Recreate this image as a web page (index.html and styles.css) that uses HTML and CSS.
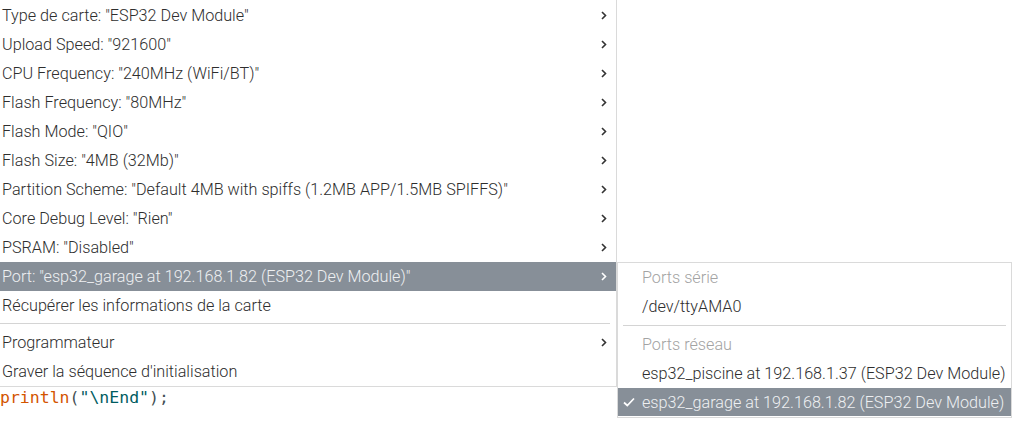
FILE: index.html
```html
<!DOCTYPE html>
<html lang="fr">
<head>
<meta charset="utf-8">
<link rel="stylesheet" href="styles.css">
</head>
<body>
<div class="screen">
  <div class="menu">
    <div class="item"><span>Type de carte: "ESP32 Dev Module"</span><svg class="chev" viewBox="0 0 6 9"><path d="M1 1 L4.5 4.5 L1 8"/></svg></div>
    <div class="item"><span>Upload Speed: "921600"</span><svg class="chev" viewBox="0 0 6 9"><path d="M1 1 L4.5 4.5 L1 8"/></svg></div>
    <div class="item"><span>CPU Frequency: "240MHz (WiFi/BT)"</span><svg class="chev" viewBox="0 0 6 9"><path d="M1 1 L4.5 4.5 L1 8"/></svg></div>
    <div class="item"><span>Flash Frequency: "80MHz"</span><svg class="chev" viewBox="0 0 6 9"><path d="M1 1 L4.5 4.5 L1 8"/></svg></div>
    <div class="item"><span>Flash Mode: "QIO"</span><svg class="chev" viewBox="0 0 6 9"><path d="M1 1 L4.5 4.5 L1 8"/></svg></div>
    <div class="item"><span>Flash Size: "4MB (32Mb)"</span><svg class="chev" viewBox="0 0 6 9"><path d="M1 1 L4.5 4.5 L1 8"/></svg></div>
    <div class="item"><span>Partition Scheme: "Default 4MB with spiffs (1.2MB APP/1.5MB SPIFFS)"</span><svg class="chev" viewBox="0 0 6 9"><path d="M1 1 L4.5 4.5 L1 8"/></svg></div>
    <div class="item"><span>Core Debug Level: "Rien"</span><svg class="chev" viewBox="0 0 6 9"><path d="M1 1 L4.5 4.5 L1 8"/></svg></div>
    <div class="item"><span>PSRAM: "Disabled"</span><svg class="chev" viewBox="0 0 6 9"><path d="M1 1 L4.5 4.5 L1 8"/></svg></div>
    <div class="item active"><span>Port: "esp32_garage at 192.168.1.82 (ESP32 Dev Module)"</span><svg class="chev" viewBox="0 0 6 9"><path d="M1 1 L4.5 4.5 L1 8"/></svg></div>
    <div class="item"><span>Récupérer les informations de la carte</span></div>
    <div class="sep"></div>
    <div class="item"><span>Programmateur</span><svg class="chev" viewBox="0 0 6 9"><path d="M1 1 L4.5 4.5 L1 8"/></svg></div>
    <div class="item"><span>Graver la séquence d'initialisation</span></div>
  </div>
  <div class="code"><span class="kw">println</span>(<span class="str">"\nEnd"</span>);</div>

  <div class="submenu">
    <div class="sitem header">Ports série</div>
    <div class="sitem">/dev/ttyAMA0</div>
    <div class="ssep"></div>
    <div class="sitem header">Ports réseau</div>
    <div class="sitem">esp32_piscine at 192.168.1.37 (ESP32 Dev Module)</div>
    <div class="sitem active"><svg class="check" viewBox="0 0 12 10"><path d="M1 5.5 L4.3 8.5 L11 1.5"/></svg>esp32_garage at 192.168.1.82 (ESP32 Dev Module)</div>
  </div>
</div>
</body>
</html>
```
FILE: styles.css
```css
html, body {
  margin: 0;
  padding: 0;
  background: #ffffff;
}
.screen {
  position: relative;
  width: 1018px;
  height: 424px;
  overflow: hidden;
  font-family: Roboto, "Liberation Sans", sans-serif;
  font-size: 16.2px;
  font-weight: 300;
  color: #2e2e2e;
}
.menu {
  width: 616px;
  padding-top: 1px;
  border-right: 1px solid #dadada;
  border-bottom: 1px solid #dadada;
  background: #ffffff;
}
.item {
  height: 29px;
  display: flex;
  align-items: center;
  justify-content: space-between;
  padding-left: 2px;
  padding-right: 9px;
  white-space: nowrap;
}
.item.active {
  background: #878f98;
  color: #eef0f2;
}
.chev {
  width: 6px;
  height: 9px;
  fill: none;
  stroke: #333333;
  stroke-width: 1.6;
}
.item.active .chev {
  stroke: #ffffff;
}
.sep {
  height: 1px;
  background: #d4d4d4;
  margin: 3px 6px 4px 0;
}
.code {
  font-family: "DejaVu Sans Mono", monospace;
  font-size: 16.5px;
  font-weight: 400;
  line-height: 22px;
  color: #434f54;
}
.kw { color: #d35400; }
.str { color: #005c5f; }

.submenu {
  position: absolute;
  left: 617px;
  top: 262px;
  width: 393px;
  padding-bottom: 1px;
  background: #ffffff;
  border: 1px solid #dadada;
}
.sitem {
  height: 29px;
  display: flex;
  align-items: center;
  padding-left: 24px;
  white-space: nowrap;
}
.sitem.header {
  color: #a3a3a3;
}
.sitem.active {
  background: #878f98;
  color: #eef0f2;
  padding-left: 5px;
  height: 28px;
}
.check {
  width: 12px;
  height: 10px;
  margin-right: 7px;
  fill: none;
  stroke: #ffffff;
  stroke-width: 1.7;
}
.ssep {
  height: 1px;
  background: #d4d4d4;
  margin: 4px 5px 4px 5px;
}
```
